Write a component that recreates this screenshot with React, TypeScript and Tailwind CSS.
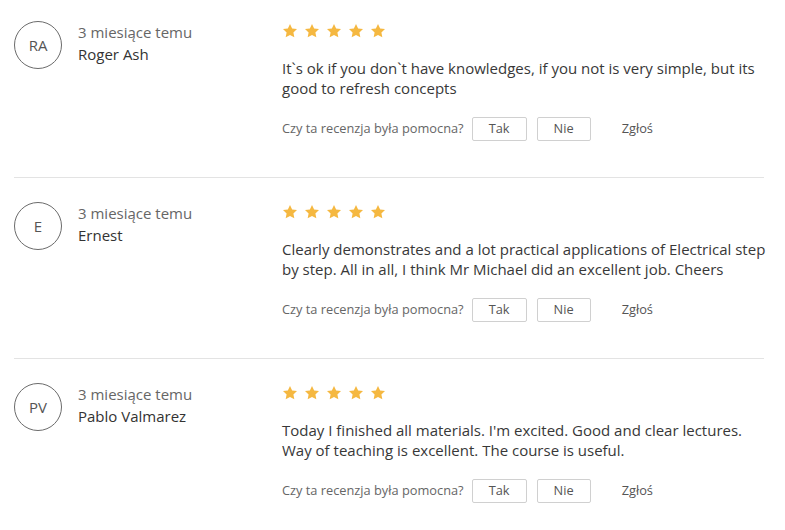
import React from "react";

type Review = { initials: string; name: string; lines: string[] };

const reviews: Review[] = [
  {
    initials: "RA",
    name: "Roger Ash",
    lines: [
      "It`s ok if you don`t have knowledges, if you not is very simple, but its",
      "good to refresh concepts",
    ],
  },
  {
    initials: "E",
    name: "Ernest",
    lines: [
      "Clearly demonstrates and a lot practical applications of Electrical step",
      "by step. All in all, I think Mr Michael did an excellent job. Cheers",
    ],
  },
  {
    initials: "PV",
    name: "Pablo Valmarez",
    lines: [
      "Today I finished all materials. I'm excited. Good and clear lectures.",
      "Way of teaching is excellent. The course is useful.",
    ],
  },
];

function Star() {
  return (
    <svg width="16" height="16" viewBox="0 0 24 24" className="block">
      <path
        d="M12 1.5l3.2 6.7 7.3.9-5.4 5.1 1.4 7.3L12 18l-6.5 3.5 1.4-7.3-5.4-5.1 7.3-.9z"
        fill="#f5b841"
      />
    </svg>
  );
}

function ReviewRow({ r, first, last }: { r: Review; first: boolean; last: boolean }) {
  return (
    <div
      className={`flex ${first ? "pt-[21px]" : "pt-[24px]"} pb-[36px] ${
        last ? "" : "border-b border-[#e3e3e3]"
      }`}
    >
      <div className="flex w-[268px] shrink-0">
        <div className="w-[48px] h-[48px] rounded-full border border-[#6b6b6b] flex items-center justify-center text-[15px] text-[#555] shrink-0">
          {r.initials}
        </div>
        <div className="ml-[16px] text-[15px] leading-[22px]">
          <div className="text-[#666]">3 miesiące temu</div>
          <div className="text-[#333]">{r.name}</div>
        </div>
      </div>
      <div className="flex-1 pt-[2px]">
        <div className="flex gap-[6px]">
          <Star />
          <Star />
          <Star />
          <Star />
          <Star />
        </div>
        <div className="mt-[19px] text-[15px] leading-[20px] text-[#383838]">
          {r.lines.map((l, i) => (
            <div key={i} className="whitespace-nowrap">
              {l}
            </div>
          ))}
        </div>
        <div className="mt-[19px] flex items-center text-[12.8px] text-[#666]">
          <span>Czy ta recenzja była pomocna?</span>
          <button className="ml-[8px] w-[55px] h-[24px] border border-[#d0d0d0] rounded-[2px] text-[#555] bg-white">
            Tak
          </button>
          <button className="ml-[10px] w-[54px] h-[24px] border border-[#d0d0d0] rounded-[2px] text-[#555] bg-white">
            Nie
          </button>
          <span className="ml-[31px] text-[#555]">Zgłoś</span>
        </div>
      </div>
    </div>
  );
}

export default function App() {
  return (
    <div
      className="w-[785px] h-[530px] bg-white overflow-hidden"
      style={{ fontFamily: '"Open Sans", "Liberation Sans", sans-serif' }}
    >
      <div className="ml-[14px] w-[750px]">
        {reviews.map((r, i) => (
          <ReviewRow key={i} r={r} first={i === 0} last={i === reviews.length - 1} />
        ))}
      </div>
    </div>
  );
}
